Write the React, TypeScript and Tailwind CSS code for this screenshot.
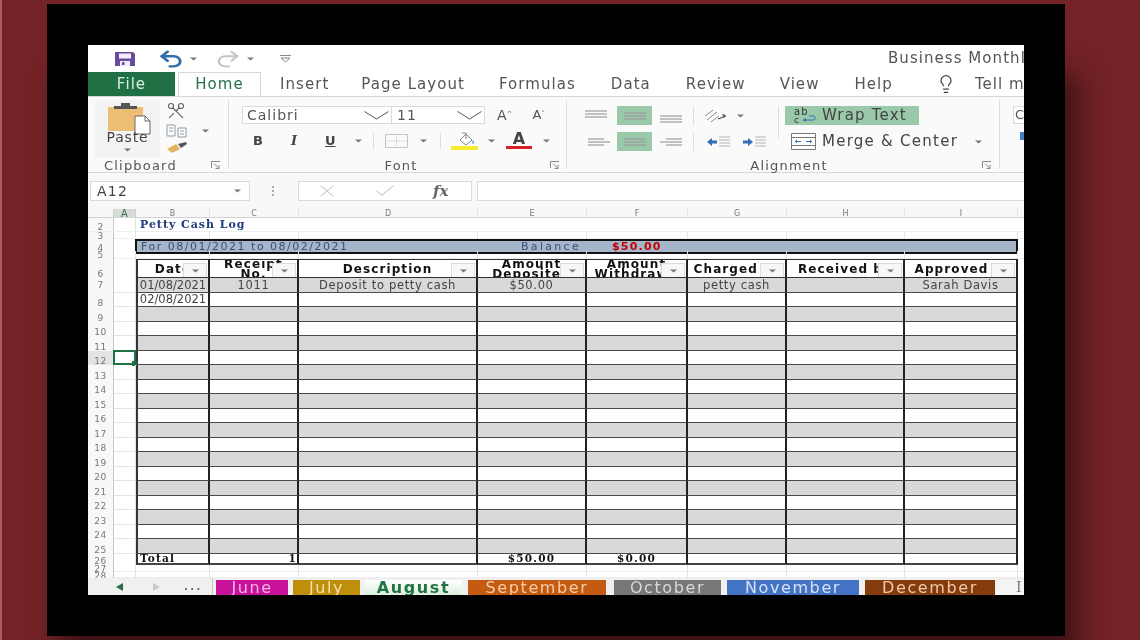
import type { ReactNode } from 'react';
import { Undo2, Redo2, Scissors, Lightbulb, X, Check } from 'lucide-react';

// --- Sheet data ---
const SHEET_COLS = 'grid grid-cols-[26px_22px_74px_89px_179px_109px_101px_99px_118px_113px_6px]';
const LETTERS = ['B', 'C', 'D', 'E', 'F', 'G', 'H', 'I'];
const HEADERS = [
  ['Date'],
  ['Receipt', 'No.'],
  ['Description'],
  ['Amount', 'Deposited'],
  ['Amount', 'Withdrawn'],
  ['Charged to'],
  ['Received by'],
  ['Approved'],
];
const ROWS: Record<number, string[]> = {
  7: ['01/08/2021', '1011', 'Deposit to petty cash', '$50.00', '', 'petty cash', '', 'Sarah Davis'],
  8: ['02/08/2021', '', '', '', '', '', '', ''],
};
const BODY_ROWS = Array.from({ length: 19 }, (_, i) => i + 7);

const TABS = [
  { name: 'June', cls: 'w-[72px] bg-[#c9129c] text-[#f3b6e0]' },
  { name: 'July', cls: 'ml-[5px] w-[67px] bg-[#bf8f0c] text-[#f4e1a8]' },
  { name: 'August', cls: 'ml-[5px] w-[97px] bg-gradient-to-b from-white to-[#dcefdc] text-[#217346] font-bold' },
  { name: 'September', cls: 'ml-[6px] w-[138px] bg-[#c55a11] text-[#f6cdaa]' },
  { name: 'October', cls: 'ml-[8px] w-[107px] bg-[#777777] text-[#d9d9d9]' },
  { name: 'November', cls: 'ml-[6px] w-[132px] bg-[#4472c4] text-[#d6e2f6]' },
  { name: 'December', cls: 'ml-[6px] w-[130px] bg-[#843c0c] text-[#f0c9ac]' },
];

// --- Little ribbon drawings ---
const SaveIcon = () => (
  <svg width="22" height="16" viewBox="0 0 22 16">
    <path d="M1 1h18l2 2v12H1z" fill="#6a4a9c" />
    <rect x="5" y="2.5" width="12" height="5" fill="#f3eef9" />
    <rect x="6" y="10" width="10" height="5" fill="#f3eef9" />
    <rect x="8" y="11" width="2.5" height="3" fill="#6a4a9c" />
  </svg>
);

const Caret = () => (
  <svg width="7" height="4" viewBox="0 0 7 4" className="shrink-0">
    <path d="M0 0.5h7L3.5 3.5z" fill="#777" />
  </svg>
);

const ComboChevron = () => (
  <svg width="25" height="9" viewBox="0 0 25 9" fill="none" stroke="#555" className="ml-auto shrink-0">
    <path d="M0.5 0.5L12.5 8L24.5 0.5" />
  </svg>
);

const PasteIcon = () => (
  <svg width="46" height="32" viewBox="0 0 46 32">
    <rect x="1" y="4" width="35" height="24" fill="#edbd75" />
    <rect x="7" y="3" width="23" height="3" fill="#555" />
    <rect x="14" y="0" width="9" height="4" fill="#555" />
    <path d="M28 13h10l5 5v13H28z" fill="#fff" stroke="#666" />
    <path d="M38 13v5h5" fill="none" stroke="#666" />
  </svg>
);

const CopyIcon = () => (
  <svg width="24" height="14" viewBox="0 0 24 14" fill="#fff" stroke="#8d9aa5">
    <path d="M1 1h8v11H1z" />
    <path d="M12 4h8v9h-8z" />
    <path d="M3 4h4M3 7h4M14 7h4M14 10h4" />
  </svg>
);

const BrushIcon = () => (
  <svg width="22" height="12" viewBox="0 0 22 12">
    <path d="M1 8l9-5 4 5-8 4z" fill="#e3b45f" />
    <path d="M12 3l8-2 1 2-6 4z" fill="#555" />
  </svg>
);

const BorderIcon = () => (
  <svg width="23" height="14" viewBox="0 0 23 14" fill="none" stroke="#c4c4c4">
    <path d="M0.5 0.5h22v13H0.5z" />
    <path d="M11.5 0.5v13M0.5 7h22" strokeDasharray="1 1" />
  </svg>
);

const FillIcon = () => (
  <svg width="27" height="20" viewBox="0 0 27 20">
    <path d="M9 9l6-6 6 6-6 5z" fill="#fff" stroke="#888" />
    <path d="M11 2h4v6" fill="none" stroke="#888" />
    <path d="M22 9c1 2 2 3 0 4-1-1-1-2 0-4z" fill="#5b9bd5" />
    <rect x="0" y="15" width="27" height="4" fill="#f5ec2c" />
  </svg>
);

const FontColorIcon = () => (
  <svg width="26" height="20" viewBox="0 0 26 20">
    <text x="13" y="13" textAnchor="middle" fontSize="16" fontWeight="700" fill="#444" fontFamily="DejaVu Sans">A</text>
    <rect x="0" y="15" width="26" height="3" fill="#d81e26" />
  </svg>
);

// lines of an alignment button: widths and vertical start
const AlignIcon = ({ y, align }: { y: number; align: 'left' | 'center' | 'right' }) => {
  const widths = [22, 22, 22];
  return (
    <svg width="24" height="14" viewBox="0 0 24 14" stroke="#9a9a9a" strokeWidth="1.2">
      {widths.map((w, i) => {
        const len = align === 'center' ? w : i === 1 ? w : w - 6;
        const x = align === 'left' ? 1 : align === 'right' ? 23 - len : 12 - len / 2;
        return <line key={i} x1={x} x2={x + len} y1={y + i * 3} y2={y + i * 3} />;
      })}
    </svg>
  );
};

const OrientIcon = () => (
  <svg width="24" height="16" viewBox="0 0 24 16" fill="none" stroke="#8a8a8a">
    <path d="M1 8l8-6M3 12l10-8M7 14l8-6" />
    <path d="M14 11l8-3" stroke="#333" />
    <path d="M19 6l3 2-3 2z" fill="#333" />
  </svg>
);

const IndentIcon = ({ right }: { right?: boolean }) => (
  <svg width="23" height="12" viewBox="0 0 23 12">
    <path d={right ? 'M10 6L5 2v2.5H0v3h5V10z' : 'M0 6l5-4v2.5h5v3H5V10z'} fill="#2f6fb3" />
    <path d="M12 1h11M12 4h11M12 7h11M12 10h11" stroke="#b5b5b5" />
  </svg>
);

const WrapIcon = () => (
  <svg width="26" height="17" viewBox="0 0 26 17">
    <text x="1" y="8" fontSize="10" fill="#333" fontFamily="DejaVu Sans">ab</text>
    <text x="1" y="16" fontSize="9" fill="#333" fontFamily="DejaVu Sans">c</text>
    <path d="M10 13h10c3 0 3-4 0-4h-4" fill="none" stroke="#2f6fb3" />
    <path d="M10 13l3-2v4z" fill="#2f6fb3" />
  </svg>
);

const MergeIcon = () => (
  <svg width="25" height="17" viewBox="0 0 25 17" fill="#fff" stroke="#777">
    <path d="M0.5 0.5h24v16H0.5z" />
    <path d="M0.5 4.5h24M0.5 12.5h24" />
    <path d="M4 8.5h6M15 8.5h6" stroke="#2f6fb3" />
    <path d="M4 8.5l2-2v4zM21 8.5l-2-2v4z" fill="#2f6fb3" stroke="none" />
  </svg>
);

const Launcher = () => (
  <svg width="10" height="9" viewBox="0 0 10 9" fill="none" stroke="#888" className="shrink-0">
    <path d="M0.5 7V0.5H9" />
    <path d="M3 2.5l5 5M8 4v3.5H4.5" />
  </svg>
);

const Sep = ({ className }: { className: string }) => <div className={`w-px bg-[#dcdcdc] ${className}`} />;

const GroupLabel = ({ children }: { children: ReactNode }) => (
  <span className="text-[13px] leading-[13px] tracking-[1.2px] text-[#555]">{children}</span>
);

// --- Ribbon ---
const Ribbon = () => (
  <div className="flex h-[76px] shrink-0 border-b border-[#d8d8d8] bg-[#fafafa]">
    {/* Clipboard */}
    <div className="my-[3px] flex w-[141px] shrink-0 flex-col border-r border-[#dcdcdc] pl-[7px]">
      <div className="flex h-[57px] shrink-0">
        <div className="flex w-[65px] flex-col items-center bg-[#f3f3f3]">
          <div className="pl-[5px] pt-[3px]">
            <PasteIcon />
          </div>
          <span className="mt-[-6px] text-[14px] leading-[16px] tracking-[0.8px] text-[#444]">Paste</span>
          <div className="mt-[3px]">
            <Caret />
          </div>
        </div>
        <div className="ml-[6px] flex flex-col gap-[3px] pt-[1px]">
          <Scissors size={20} strokeWidth={1.4} className="rotate-90 text-[#666]" />
          <div className="flex items-center gap-[12px]">
            <CopyIcon />
            <Caret />
          </div>
          <BrushIcon />
        </div>
      </div>
      <div className="mt-[2px] flex shrink-0 items-center pl-[9px] pr-[7px]">
        <GroupLabel>Clipboard</GroupLabel>
        <div className="ml-auto">
          <Launcher />
        </div>
      </div>
    </div>

    {/* Font */}
    <div className="my-[3px] flex w-[338px] shrink-0 flex-col border-r border-[#dcdcdc] pl-[13px]">
      <div className="mt-[6px] flex h-[18px] shrink-0 items-center">
        <div className="flex h-[18px] w-[150px] items-center border border-[#dadada] bg-white pl-[4px] pr-[2px] text-[14px] tracking-[1px] text-[#555]">
          Calibri
          <ComboChevron />
        </div>
        <div className="flex h-[18px] w-[93px] items-center border border-l-0 border-[#dadada] bg-white pl-[5px] pr-[2px] text-[14px] tracking-[1px] text-[#555]">
          11
          <ComboChevron />
        </div>
        <span className="ml-[12px] text-[14px] text-[#555]">A<sup className="text-[7px]">^</sup></span>
        <span className="ml-[20px] text-[13px] text-[#555]">A<sup className="text-[7px]">˅</sup></span>
      </div>
      <div className="mt-[7px] flex h-[20px] shrink-0 items-center text-[#444]">
        <span className="ml-[11px] w-[11px] text-[13px] font-bold">B</span>
        <span className="ml-[27px] w-[12px] font-['DejaVu_Serif',serif] text-[13px] font-bold italic">I</span>
        <span className="ml-[22px] w-[12px] text-[13px] font-bold underline">U</span>
        <div className="ml-[18px]"><Caret /></div>
        <Sep className="ml-[11px] h-[16px]" />
        <div className="ml-[11px]"><BorderIcon /></div>
        <div className="ml-[12px]"><Caret /></div>
        <Sep className="ml-[13px] h-[16px]" />
        <div className="ml-[10px]"><FillIcon /></div>
        <div className="ml-[10px]"><Caret /></div>
        <div className="ml-[11px]"><FontColorIcon /></div>
        <div className="ml-[11px]"><Caret /></div>
      </div>
      <div className="mt-[8px] flex shrink-0 items-center pr-[6px]">
        <div className="flex flex-1 justify-center pl-[10px]"><GroupLabel>Font</GroupLabel></div>
        <Launcher />
      </div>
    </div>

    {/* Alignment */}
    <div className="my-[3px] flex w-[433px] shrink-0 flex-col border-r border-[#dcdcdc] pl-[17px]">
      <div className="mt-[6px] flex h-[19px] shrink-0 items-center">
        <div className="flex w-[33px] justify-start"><AlignIcon y={2} align="center" /></div>
        <div className="flex h-[19px] w-[35px] items-center justify-center bg-[#9ac9a9]"><AlignIcon y={4} align="center" /></div>
        <div className="ml-[7px] flex w-[24px]"><AlignIcon y={7} align="center" /></div>
        <Sep className="ml-[10px] h-[18px]" />
        <div className="ml-[10px]"><OrientIcon /></div>
        <div className="ml-[9px]"><Caret /></div>
        <Sep className="ml-[34px] h-[32px] self-start" />
        <div className="ml-[6px] flex h-[19px] w-[134px] items-center whitespace-nowrap bg-[#9ac9a9] pl-[8px] text-[15px] tracking-[1.2px] text-[#444]">
          <WrapIcon />
          <span className="ml-[3px]">Wrap Text</span>
        </div>
      </div>
      <div className="mt-[7px] flex h-[19px] shrink-0 items-center">
        <div className="flex w-[33px] justify-start pl-[3px]"><AlignIcon y={4} align="left" /></div>
        <div className="flex h-[19px] w-[35px] items-center justify-center bg-[#9ac9a9]"><AlignIcon y={4} align="center" /></div>
        <div className="ml-[7px] flex w-[24px]"><AlignIcon y={4} align="right" /></div>
        <Sep className="ml-[10px] h-[18px]" />
        <div className="ml-[13px]"><IndentIcon /></div>
        <div className="ml-[13px]"><IndentIcon right /></div>
        <div className="ml-[25px]"><MergeIcon /></div>
        <span className="ml-[6px] whitespace-nowrap text-[15px] tracking-[1.25px] text-[#444]">Merge &amp; Center</span>
        <div className="ml-[17px]"><Caret /></div>
      </div>
      <div className="mt-[8px] flex shrink-0 items-center pr-[7px]">
        <div className="flex flex-1 justify-center pl-[12px]"><GroupLabel>Alignment</GroupLabel></div>
        <Launcher />
      </div>
    </div>

    {/* Next group, cut off by the window */}
    <div className="flex flex-col pl-[13px] pt-[9px]">
      <div className="h-[18px] w-[12px] border-y border-l border-[#dadada] bg-white pl-[1px] text-[13px] leading-[16px] text-[#555]">C</div>
      <div className="ml-[7px] mt-[8px] h-[8px] w-[4px] bg-[#3f7ec2]" />
    </div>
  </div>
);

// --- Formula bar ---
const FormulaBar = () => (
  <div className="flex h-[36px] shrink-0 items-start bg-[#f8f8f8] pl-[2px] pt-[8px]">
    <div className="flex h-[20px] w-[160px] items-center border border-[#dadada] bg-white pl-[6px] pr-[8px] text-[14px] tracking-[1.2px] text-[#444]">
      A12
      <div className="ml-auto"><Caret /></div>
    </div>
    <div className="ml-[22px] mt-[5px] flex flex-col gap-[2px]">
      <div className="h-[2px] w-[2px] bg-[#aaa]" />
      <div className="h-[2px] w-[2px] bg-[#aaa]" />
      <div className="h-[2px] w-[2px] bg-[#aaa]" />
    </div>
    <div className="ml-[24px] flex h-[20px] w-[174px] items-center border border-[#dadada] bg-white text-[#c8c8c8]">
      <X size={20} strokeWidth={1.2} className="ml-[18px] scale-x-125" />
      <Check size={20} strokeWidth={1.2} className="ml-[38px] scale-x-125" />
      <span className="ml-[38px] font-['DejaVu_Serif',serif] text-[15px] font-bold italic text-[#666]">fx</span>
    </div>
    <div className="ml-[5px] h-[20px] flex-1 border border-r-0 border-[#dadada] bg-white" />
  </div>
);

// --- Sheet ---
const RowNum = ({ n, active }: { n?: number; active?: boolean }) => (
  <div className={`flex items-end justify-center border-r border-[#c8c8c8] text-[9px] leading-[8px] tracking-[0.5px] text-[#777] ${active ? 'bg-[#e3e3e3]' : 'bg-[#f8f8f8]'} ${n === 7 ? 'pb-[4px]' : ''} ${n === 4 ? 'pb-[2px]' : ''}`}>
    {n}
  </div>
);

const LightRow = ({ n, className }: { n: number; className: string }) => (
  <div className={`${SHEET_COLS} ${className} border-b border-[#eeeeee]`}>
    <RowNum n={n} />
    <div className="border-r border-[#e4e4e4]" />
    {LETTERS.map((l) => (
      <div key={l} className="border-r border-[#e4e4e4]" />
    ))}
  </div>
);

const Sheet = () => (
  <div className="flex flex-col">
    {/* column letters */}
    <div className={`${SHEET_COLS} h-[9px] border-b border-[#d0d0d0] bg-[#f8f8f8] text-center text-[8px] leading-[9px] text-[#777]`}>
      <div className="border-r border-[#d0d0d0]" />
      <div className="border-r border-[#d0d0d0] bg-[#d4dcd4] text-[10px] text-[#3f6f50]">A</div>
      {LETTERS.map((l) => (
        <div key={l} className="border-r border-[#e0e0e0]">{l}</div>
      ))}
    </div>

    {/* row 2 */}
    <div className={`${SHEET_COLS} h-[14px] border-b border-[#eeeeee]`}>
      <RowNum n={2} />
      <div className="border-r border-[#e4e4e4]" />
      <div className="col-span-3 whitespace-nowrap pl-[4px] font-['DejaVu_Serif',serif] text-[11px] font-bold leading-[13px] tracking-[0.95px] text-[#1f3a7a]">
        Petty Cash Log
      </div>
    </div>
    <LightRow n={3} className="h-[7px]" />

    {/* row 4: period and balance */}
    <div className={`${SHEET_COLS} h-[12px]`}>
      <RowNum n={4} />
      <div className="border-r border-[#e4e4e4]" />
      <div className="col-span-8 -ml-px flex items-center whitespace-nowrap border-2 border-[#111] bg-[#a6b5c9] pl-[4px] text-[11px] leading-none tracking-[1.5px] text-[#3b4f77]">
        <span className="w-[380px]">For 08/01/2021 to 08/02/2021</span>
        <span className="w-[91px] tracking-[2.3px]">Balance</span>
        <span className="font-bold tracking-[1.2px] text-[#c00000]">$50.00</span>
      </div>
    </div>
    <LightRow n={5} className="h-[8px]" />

    {/* row 6: filter headers */}
    <div className={`${SHEET_COLS} h-[19px]`}>
      <RowNum n={6} />
      <div className="border-r border-[#e4e4e4]" />
      {HEADERS.map((lines, i) => (
        <div
          key={lines.join()}
          className={`relative flex flex-col items-center justify-center overflow-hidden whitespace-nowrap border-y border-y-[#333] border-r-2 border-r-[#222] bg-white text-[12px] font-bold leading-[10px] tracking-[1.1px] text-[#111] ${i === 0 ? 'border-l-2 border-l-[#333]' : ''} ${i === 7 ? 'pr-[18px]' : ''}`}
        >
          {lines.map((t) => (
            <span key={t}>{t}</span>
          ))}
          <div className="absolute right-px top-[3px] flex h-[15px] w-[24px] items-center justify-center border border-[#dcdcdc] bg-[#f7f7f7]">
            <Caret />
          </div>
        </div>
      ))}
    </div>

    {/* rows 7 to 25 */}
    <div className="grid h-[276px] grid-rows-[repeat(19,1fr)]">
      {BODY_ROWS.map((n) => {
        const cells = ROWS[n] ?? ['', '', '', '', '', '', '', ''];
        const shaded = n % 2 === 1;
        return (
          <div key={n} className={SHEET_COLS}>
            <RowNum n={n} active={n === 12} />
            <div className="relative border-b border-r border-[#e4e4e4]">
              {n === 12 && (
                <div className="absolute -left-px -right-px -top-px bottom-[-1px] border-2 border-[#1f7145]">
                  <div className="absolute -bottom-[3px] -right-[3px] h-[5px] w-[5px] bg-[#1f7145]" />
                </div>
              )}
            </div>
            {cells.map((c, i) => (
              <div
                key={i}
                className={`flex items-center justify-center overflow-hidden whitespace-nowrap border-b border-b-[#4a4a4a] border-r-2 border-r-[#222] pt-px text-[11.5px] leading-none text-[#444] ${shaded ? 'bg-[#d9d9d9]' : 'bg-white'} ${i === 0 ? 'border-l-2 border-l-[#333]' : 'tracking-[0.65px]'}`}
              >
                {c}
              </div>
            ))}
          </div>
        );
      })}
    </div>

    {/* row 26: totals */}
    <div className={`${SHEET_COLS} h-[11px]`}>
      <RowNum n={26} />
      <div className="border-r border-[#e4e4e4]" />
      {['Total', '1', '', '$50.00', '$0.00', '', '', ''].map((c, i) => (
        <div
          key={i}
          className={`flex items-center overflow-hidden whitespace-nowrap border-b-2 border-b-[#444] border-r-2 border-r-[#222] font-['DejaVu_Serif',serif] text-[10.5px] font-bold leading-[9px] tracking-[1.2px] text-[#111] ${i === 0 ? 'border-l-2 border-l-[#333] pl-[2px]' : ''} ${i === 1 ? 'justify-end' : ''} ${i > 1 ? 'justify-center' : ''}`}
        >
          {c}
        </div>
      ))}
    </div>
    <LightRow n={27} className="h-[7px]" />
    <LightRow n={28} className="h-[6px]" />
  </div>
);

// --- Sheet tabs ---
const SheetTabs = () => (
  <div className="flex h-[17px] shrink-0 items-end bg-[#f0f0f0]">
    <div className="flex h-[17px] w-[125px] items-center border-r border-[#c8c8c8]">
      <svg width="8" height="8" viewBox="0 0 8 8" className="ml-[28px]"><path d="M0 4l7-4v8z" fill="#2d6b4a" /></svg>
      <svg width="8" height="8" viewBox="0 0 8 8" className="ml-[28px]"><path d="M8 4L1 0v8z" fill="#c8c8c8" /></svg>
      <span className="ml-[24px] text-[10px] font-bold leading-none tracking-[2.5px] text-[#666]">...</span>
    </div>
    <div className="flex pl-[3px]">
      {TABS.map((t) => (
        <div key={t.name} className={`flex h-[15px] items-center justify-center text-[16px] leading-none tracking-[1.6px] ${t.cls}`}>
          {t.name}
        </div>
      ))}
    </div>
    <div className="ml-[2px] h-[15px] flex-1 overflow-hidden bg-[#f4f4f4] pl-[19px] font-['DejaVu_Serif',serif] text-[14px] leading-[15px] text-[#777]">
      I
    </div>
  </div>
);

// --- Page ---
export default function App() {
  return (
    <div className="h-[640px] w-[1140px] overflow-hidden border-l-2 border-[#a85f62] bg-[#732226] pl-[45px] pt-[4px] font-['DejaVu_Sans',sans-serif]">
      <div className="h-[632px] w-[1018px] bg-black pl-[41px] pt-[41px] shadow-[14px_70px_26px_rgba(0,0,0,0.45)]">
        <div className="flex h-[550px] w-[936px] flex-col overflow-hidden bg-white blur-[0.35px]">
          {/* Quick access bar and title */}
          <div className="flex h-[27px] shrink-0 items-center">
            <div className="ml-[26px]"><SaveIcon /></div>
            <Undo2 size={22} strokeWidth={2.6} className="ml-[24px] scale-x-125 text-[#2f6fa8]" />
            <div className="ml-[8px]"><Caret /></div>
            <Redo2 size={22} strokeWidth={2} className="ml-[20px] scale-x-125 text-[#c4c4c4]" />
            <div className="ml-[8px]"><Caret /></div>
            <svg width="11" height="8" viewBox="0 0 11 8" className="ml-[26px]" fill="none" stroke="#888"><path d="M0 0.5h11M1 3l4.5 4L10 3z" /></svg>
            <div className="mb-px ml-auto w-[136px] shrink-0 overflow-hidden whitespace-nowrap text-[15px] tracking-[1.05px] text-[#555]">Business Monthly Budget</div>
          </div>

          {/* Ribbon tabs */}
          <div className="flex h-[25px] shrink-0 items-center overflow-hidden whitespace-nowrap border-b border-[#d8d8d8] text-[15px] tracking-[1.05px] text-[#555]">
            <div className="flex h-[25px] w-[87px] shrink-0 items-center justify-center bg-[#1f7145] text-[#d9ece0]">File</div>
            <div className="ml-[3px] flex h-[25px] w-[83px] shrink-0 items-center justify-center border-x border-t border-[#d8d8d8] text-[#217346]">Home</div>
            <span className="ml-[19px] shrink-0">Insert</span>
            <span className="ml-[32px] shrink-0">Page Layout</span>
            <span className="ml-[34px] shrink-0">Formulas</span>
            <span className="ml-[35px] shrink-0">Data</span>
            <span className="ml-[35px] shrink-0">Review</span>
            <span className="ml-[34px] shrink-0">View</span>
            <span className="ml-[35px] shrink-0">Help</span>
            <Lightbulb size={20} strokeWidth={1.5} className="ml-[43px] shrink-0 text-[#444]" />
            <span className="ml-[19px] shrink-0">Tell me</span>
          </div>

          <Ribbon />
          <FormulaBar />
          <Sheet />
          <SheetTabs />
        </div>
      </div>
    </div>
  );
}
